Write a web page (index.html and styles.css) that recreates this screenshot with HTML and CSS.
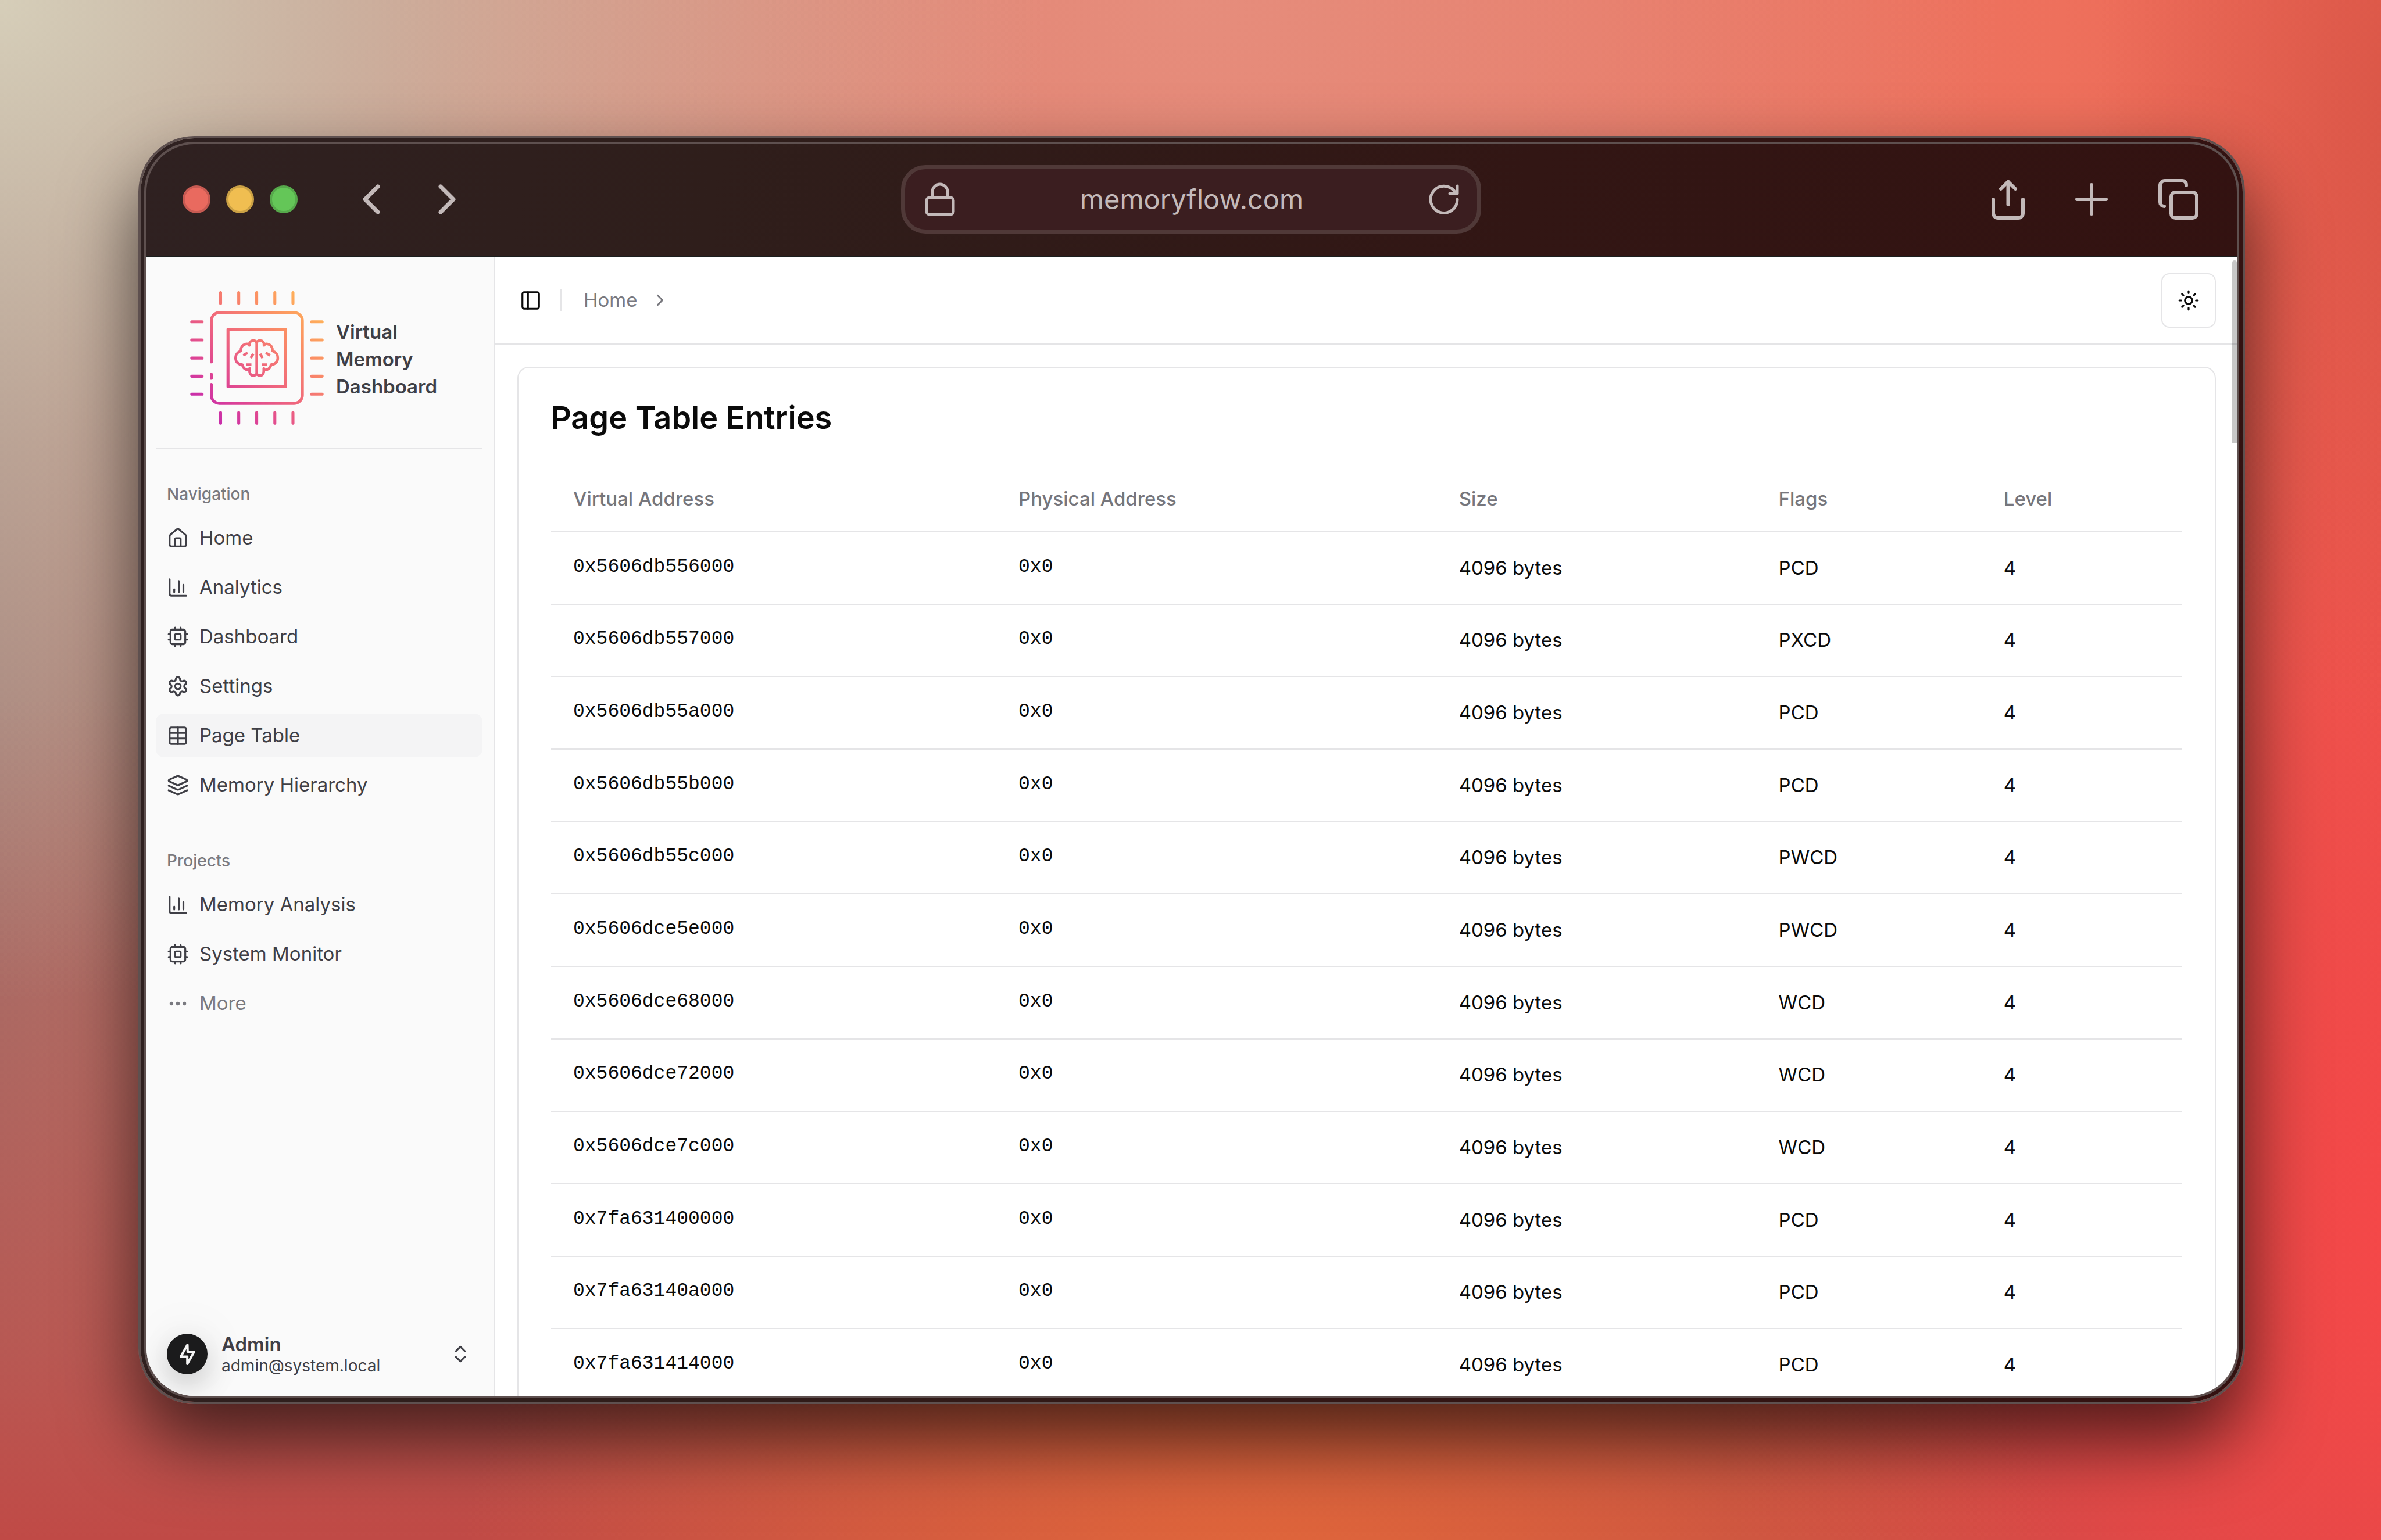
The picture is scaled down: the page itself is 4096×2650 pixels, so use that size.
FILE: index.html
```html
<!DOCTYPE html>
<html lang="en">
<head>
<meta charset="utf-8">
<title>Virtual Memory Dashboard</title>
<link rel="stylesheet" href="styles.css">
</head>
<body>
<svg class="sprite" aria-hidden="true">
  <symbol id="house" viewBox="0 0 24 24"><path d="M15 21v-8a1 1 0 0 0-1-1h-4a1 1 0 0 0-1 1v8"/><path d="M3 10a2 2 0 0 1 .709-1.528l7-5.999a2 2 0 0 1 2.582 0l7 5.999A2 2 0 0 1 21 10v9a2 2 0 0 1-2 2H5a2 2 0 0 1-2-2z"/></symbol>
  <symbol id="chart" viewBox="0 0 24 24"><path d="M3 3v16a2 2 0 0 0 2 2h16"/><path d="M18 17V9"/><path d="M13 17V5"/><path d="M8 17v-3"/></symbol>
  <symbol id="cpu" viewBox="0 0 24 24"><rect width="16" height="16" x="4" y="4" rx="2"/><rect width="6" height="6" x="9" y="9" rx="1"/><path d="M15 2v2M15 20v2M2 15h2M2 9h2M20 15h2M20 9h2M9 2v2M9 20v2"/></symbol>
  <symbol id="gear" viewBox="0 0 24 24"><path d="M12.22 2h-.44a2 2 0 0 0-2 2v.18a2 2 0 0 1-1 1.73l-.43.25a2 2 0 0 1-2 0l-.15-.08a2 2 0 0 0-2.73.73l-.22.38a2 2 0 0 0 .73 2.73l.15.1a2 2 0 0 1 1 1.72v.51a2 2 0 0 1-1 1.74l-.15.09a2 2 0 0 0-.73 2.73l.22.38a2 2 0 0 0 2.73.73l.15-.08a2 2 0 0 1 2 0l.43.25a2 2 0 0 1 1 1.73V20a2 2 0 0 0 2 2h.44a2 2 0 0 0 2-2v-.18a2 2 0 0 1 1-1.73l.43-.25a2 2 0 0 1 2 0l.15.08a2 2 0 0 0 2.73-.73l.22-.39a2 2 0 0 0-.73-2.73l-.15-.08a2 2 0 0 1-1-1.74v-.5a2 2 0 0 1 1-1.74l.15-.09a2 2 0 0 0 .73-2.73l-.22-.38a2 2 0 0 0-2.73-.73l-.15.08a2 2 0 0 1-2 0l-.43-.25a2 2 0 0 1-1-1.73V4a2 2 0 0 0-2-2z"/><circle cx="12" cy="12" r="3"/></symbol>
  <symbol id="table" viewBox="0 0 24 24"><path d="M12 3v18"/><rect width="18" height="18" x="3" y="3" rx="2"/><path d="M3 9h18M3 15h18"/></symbol>
  <symbol id="layers" viewBox="0 0 24 24"><path d="m12.83 2.18a2 2 0 0 0-1.66 0L2.6 6.08a1 1 0 0 0 0 1.83l8.58 3.91a2 2 0 0 0 1.66 0l8.58-3.9a1 1 0 0 0 0-1.83Z"/><path d="m22 17.65-9.17 4.16a2 2 0 0 1-1.66 0L2 17.65"/><path d="m22 12.65-9.17 4.16a2 2 0 0 1-1.66 0L2 12.65"/></symbol>
  <symbol id="dots" viewBox="0 0 24 24"><circle cx="12" cy="12" r="1"/><circle cx="19" cy="12" r="1"/><circle cx="5" cy="12" r="1"/></symbol>
  <symbol id="updown" viewBox="0 0 24 24"><path d="m7 15 5 5 5-5M7 9l5-5 5 5"/></symbol>
  <symbol id="panel" viewBox="0 0 24 24"><rect width="18" height="18" x="3" y="3" rx="2"/><path d="M9 3v18"/></symbol>
  <symbol id="right" viewBox="0 0 24 24"><path d="m9 18 6-6-6-6"/></symbol>
  <symbol id="sun" viewBox="0 0 24 24"><circle cx="12" cy="12" r="4"/><path d="M12 2v2M12 20v2M4.93 4.93l1.41 1.41M17.66 17.66l1.41 1.41M2 12h2M20 12h2M6.34 17.66l-1.41 1.41M19.07 4.93l-1.41 1.41"/></symbol>
</svg>

<div class="window">
  <div class="frame">
    <header class="titlebar">
      <div class="bar-left">
        <div class="lights">
          <button class="light red" aria-label="Close"></button>
          <button class="light yellow" aria-label="Minimize"></button>
          <button class="light green" aria-label="Zoom"></button>
        </div>
        <div class="history">
          <button class="tool" aria-label="Back"><svg width="30" height="52" viewBox="0 0 30 52"><path d="M26 4 4 26l22 22"/></svg></button>
          <button class="tool" aria-label="Forward"><svg width="30" height="52" viewBox="0 0 30 52"><path d="m4 4 22 22L4 48"/></svg></button>
        </div>
      </div>
      <div class="address">
        <svg class="lock" width="52" height="58" viewBox="0 0 52 58" aria-hidden="true"><rect x="3" y="26" width="46" height="29" rx="5"/><path d="M13 26V16a13 13 0 0 1 26 0v10"/></svg>
        <input class="url" type="text" value="memoryflow.com" aria-label="Address">
        <button class="tool reload" aria-label="Reload"><svg width="52" height="52" viewBox="0 0 52 52"><path d="M49 26A23 23 0 1 1 46 15"/><path d="M49 3v13H36"/></svg></button>
      </div>
      <div class="bar-right">
        <button class="tool" aria-label="Share"><svg width="57" height="70" viewBox="0 0 57 70"><path d="M3 35v24a8 8 0 0 0 8 8h35a8 8 0 0 0 8-8V35"/><path d="M28.500 5v39"/><path d="M16 17 28.500 4.500 41 17"/></svg></button>
        <button class="tool" aria-label="New tab"><svg width="56" height="56" viewBox="0 0 56 56"><path d="M28 3v50M3 28h50"/></svg></button>
        <button class="tool" aria-label="Show tabs"><svg width="70" height="70" viewBox="0 0 70 70"><rect x="22" y="23" width="44" height="44" rx="7"/><path d="M48 11c0-5-3-8-7-8H11a8 8 0 0 0-8 8v29c0 4 3 7 7 7"/></svg></button>
      </div>
    </header>

    <div class="app">
      <aside class="sidebar">
        <div class="brand">
          <svg class="logo" viewBox="9 21 811 811" aria-hidden="true">
            <defs><linearGradient id="heat" gradientUnits="userSpaceOnUse" x1="80" y1="760" x2="750" y2="90"><stop offset="0" stop-color="#c52aae"/><stop offset=".22" stop-color="#dd4394"/><stop offset=".48" stop-color="#f0687c"/><stop offset=".75" stop-color="#fb8e64"/><stop offset="1" stop-color="#ffb458"/></linearGradient></defs>
            <g fill="none" stroke="url(#heat)" stroke-width="18" stroke-linecap="round" stroke-linejoin="round">
              <path d="M194 30l.1 65M304 30l.1 65M413 30l.1 65M523 30l.1 65M633 30l.1 65M194 758l.1 64M304 758l.1 64M413 758l.1 64M523 758l.1 64M633 758l.1 64"/>
              <path d="M19 207h63M19 317h63M19 427h63M19 537h63M19 646h63M746 207h64M746 317h64M746 427h64M746 537h64M746 646h64"/>
              <path d="M138 450V200a49 49 0 0 1 49-49H640a50 50 0 0 1 50 50V652a50 50 0 0 1-50 50H187a49 49 0 0 1-49-49V587M138 525v25"/>
              <path d="M239 252h349v349H239z"/>
              <path stroke-width="16" d="M413 335C411 325 402 321 391 321C378 321 366 331 369 350C364 341 352 340 342 343C324 349 316 365 317 384C295 391 285 409 285 427C285 449 301 467 326 467C329 488 347 502 370 498C368 525 380 533 392 533C403 533 411 529 413 520M413 335C415 325 424 321 435 321C448 321 460 331 457 350C462 341 474 340 484 343C502 349 510 365 509 384C531 391 541 409 541 427C541 449 525 467 500 467C497 488 479 502 456 498C458 525 446 533 434 533C423 533 415 529 413 520M413 335V520M370 498V490M456 498V490"/>
              <path stroke-width="16" stroke-linecap="butt" d="M331 411 358 396M392 401 377 427M348 467h33M495 411 468 396M434 401 449 427M478 467h-33"/>
            </g>
          </svg>
          <span class="brand-name">Virtual<br>Memory<br>Dashboard</span>
        </div>
        <nav class="groups">
          <section class="group">
            <h2 class="group-label">Navigation</h2>
            <ul class="menu">
              <li><a class="item" href="#"><svg class="icon"><use href="#house"/></svg>Home</a></li>
              <li><a class="item" href="#"><svg class="icon"><use href="#chart"/></svg>Analytics</a></li>
              <li><a class="item" href="#"><svg class="icon"><use href="#cpu"/></svg>Dashboard</a></li>
              <li><a class="item" href="#"><svg class="icon"><use href="#gear"/></svg>Settings</a></li>
              <li><a class="item active" href="#" aria-current="page"><svg class="icon"><use href="#table"/></svg>Page Table</a></li>
              <li><a class="item" href="#"><svg class="icon"><use href="#layers"/></svg>Memory Hierarchy</a></li>
            </ul>
          </section>
          <section class="group">
            <h2 class="group-label">Projects</h2>
            <ul class="menu">
              <li><a class="item" href="#"><svg class="icon"><use href="#chart"/></svg>Memory Analysis</a></li>
              <li><a class="item" href="#"><svg class="icon"><use href="#cpu"/></svg>System Monitor</a></li>
              <li><a class="item muted" href="#"><svg class="icon"><use href="#dots"/></svg>More</a></li>
            </ul>
          </section>
        </nav>
        <button class="account">
          <span class="avatar"><svg width="29" height="39" viewBox="0 0 29 39"><path d="M14.500 3 3 23.500h11.200V36L26 15H14.800z"/></svg></span>
          <span class="who"><strong class="name">Admin</strong><span class="mail">admin@system.local</span></span>
          <svg class="icon"><use href="#updown"/></svg>
        </button>
      </aside>

      <main class="main">
        <div class="topbar">
          <button class="plain" aria-label="Toggle sidebar"><svg class="icon"><use href="#panel"/></svg></button>
          <span class="separator"></span>
          <nav class="crumbs" aria-label="Breadcrumb"><a class="crumb" href="#">Home</a><svg class="icon small"><use href="#right"/></svg></nav>
          <button class="theme" aria-label="Toggle theme"><svg class="icon"><use href="#sun"/></svg></button>
        </div>
        <div class="content">
          <section class="card">
            <h1 class="card-title">Page Table Entries</h1>
            <table class="entries">
              <colgroup><col class="c-virtual"><col class="c-physical"><col class="c-size"><col class="c-flags"><col class="c-level"></colgroup>
              <thead><tr><th>Virtual Address</th><th>Physical Address</th><th>Size</th><th>Flags</th><th>Level</th></tr></thead>
              <tbody>
                <tr><td class="mono">0x5606db556000</td><td class="mono">0x0</td><td>4096 bytes</td><td>PCD</td><td>4</td></tr>
                <tr><td class="mono">0x5606db557000</td><td class="mono">0x0</td><td>4096 bytes</td><td>PXCD</td><td>4</td></tr>
                <tr><td class="mono">0x5606db55a000</td><td class="mono">0x0</td><td>4096 bytes</td><td>PCD</td><td>4</td></tr>
                <tr><td class="mono">0x5606db55b000</td><td class="mono">0x0</td><td>4096 bytes</td><td>PCD</td><td>4</td></tr>
                <tr><td class="mono">0x5606db55c000</td><td class="mono">0x0</td><td>4096 bytes</td><td>PWCD</td><td>4</td></tr>
                <tr><td class="mono">0x5606dce5e000</td><td class="mono">0x0</td><td>4096 bytes</td><td>PWCD</td><td>4</td></tr>
                <tr><td class="mono">0x5606dce68000</td><td class="mono">0x0</td><td>4096 bytes</td><td>WCD</td><td>4</td></tr>
                <tr><td class="mono">0x5606dce72000</td><td class="mono">0x0</td><td>4096 bytes</td><td>WCD</td><td>4</td></tr>
                <tr><td class="mono">0x5606dce7c000</td><td class="mono">0x0</td><td>4096 bytes</td><td>WCD</td><td>4</td></tr>
                <tr><td class="mono">0x7fa631400000</td><td class="mono">0x0</td><td>4096 bytes</td><td>PCD</td><td>4</td></tr>
                <tr><td class="mono">0x7fa63140a000</td><td class="mono">0x0</td><td>4096 bytes</td><td>PCD</td><td>4</td></tr>
                <tr><td class="mono">0x7fa631414000</td><td class="mono">0x0</td><td>4096 bytes</td><td>PCD</td><td>4</td></tr>
              </tbody>
            </table>
          </section>
        </div>
        <span class="scroll-thumb"></span>
      </main>
    </div>
  </div>
</div>
</body>
</html>
```
FILE: styles.css
```css
* { box-sizing: border-box; margin: 0; padding: 0; }

body {
  height: 100vh;
  padding: 234px 234px 234px 238px;
  overflow: hidden;
  font-family: Inter, "Liberation Sans", sans-serif;
  font-size: 33px;
  line-height: 47px;
  color: #0a0a0a;
  background:
    radial-gradient(ellipse 44% 65% at 0% 0%, #d6ceb9 0%, #d6ceb980 45%, #d6ceb900 100%),
    radial-gradient(ellipse 34% 45% at 50% 0%, #e68d7c 0%, #e68d7c80 50%, #e68d7c00 100%),
    radial-gradient(ellipse 14% 40% at 102% 8%, #d95546 0%, #d9554680 45%, #d9554600 100%),
    radial-gradient(ellipse 34% 45% at 53% 106%, #e2683a 0%, #e2683a90 50%, #e2683a00 100%),
    radial-gradient(ellipse 30% 75% at 102% 80%, #f64748 0%, #f24848b0 45%, #f2484800 100%),
    linear-gradient(0deg, #c04a46 0%, #c04a46b0 12%, #c04a4600 55%),
    linear-gradient(95deg, #9a7670 0%, #c87f70 20%, #e57c6b 50%, #ee705c 82%, #e75f50 100%);
}

button { border: 0; background: none; font: inherit; color: inherit; }
a { color: inherit; text-decoration: none; }
ul { list-style: none; }
svg { display: block; flex: none; fill: none; stroke: currentColor; stroke-linecap: round; stroke-linejoin: round; }
.sprite { display: none; }

.icon { width: 38px; height: 38px; stroke-width: 2; }
.icon.small { width: 33px; height: 33px; }

/* Browser window */
.window {
  height: 100%;
  padding: 6px;
  border: 4px solid #5e504f;
  border-radius: 96px;
  background: linear-gradient(100deg, #2f2121 0%, #2f1e1b 25%, #321614 60%, #331110 100%) border-box;
  background-clip: padding-box;
  box-shadow: 0 64px 130px rgba(0, 0, 0, .65);
}
.frame {
  display: flex;
  flex-direction: column;
  height: 100%;
  border: 4px solid #5e504f;
  border-radius: 86px;
  overflow: hidden;
}

.titlebar {
  display: grid;
  grid-template-columns: 1fr auto 1fr;
  align-items: center;
  flex: none;
  height: 194px;
  padding: 0 65px 3px 62px;
  border-bottom: 2px solid #1b1e1e;
  color: #c3b9b9;
}
.bar-left { display: flex; align-items: center; gap: 112px; }
.bar-right { display: flex; align-items: center; justify-content: flex-end; gap: 87px; }
.lights { display: flex; gap: 27px; }
.light { width: 48px; height: 48px; border-radius: 50%; border: 4px solid; }
.red { background: #e96a5f; border-color: #c65a52; }
.yellow { background: #f0be51; border-color: #cba145; }
.green { background: #64c658; border-color: #56a84b; }
.history { display: flex; gap: 100px; }
.tool { stroke-width: 6px; }
.history .tool { stroke-width: 7px; }
.address {
  display: flex;
  align-items: center;
  width: 998px;
  height: 118px;
  padding: 0 31px 0 34px;
  border: 7px solid #503938;
  border-radius: 42px;
  background: #3b1e20;
}
.lock, .reload { stroke-width: 5px; }
.url {
  flex: 1;
  min-width: 0;
  border: 0;
  background: none;
  color: inherit;
  font: 47px/60px Inter, "Liberation Sans", sans-serif;
  text-align: center;
}

/* Application */
.app { display: flex; flex: 1; min-height: 0; background: #fff; }

.sidebar {
  display: flex;
  flex-direction: column;
  flex: none;
  width: 599px;
  padding: 0 19px 0 16px;
  border-right: 2px solid #e5e5e7;
  background: #fafafa;
  color: #3f3f46;
}
.brand {
  display: flex;
  align-items: center;
  gap: 21px;
  padding: 59px 0 40px 59px;
  border-bottom: 2px solid #e5e5e7;
}
.logo { width: 230px; height: 230px; }
.brand-name { padding-top: 4px; font-weight: 600; }
.groups { display: flex; flex-direction: column; gap: 56px; flex: 1; padding-top: 40px; }
.group-label {
  padding-left: 19px;
  font-size: 28px;
  font-weight: 500;
  line-height: 75px;
  color: #79797f;
}
.menu { display: flex; flex-direction: column; gap: 10px; }
.item {
  display: flex;
  align-items: center;
  gap: 18px;
  height: 75px;
  padding: 0 19px;
  border-radius: 14px;
}
.item.active { background: #f4f4f5; }
.item.muted { color: #79797f; }

.account {
  display: flex;
  align-items: center;
  gap: 24px;
  padding: 0 19px 35px;
  text-align: left;
}
.avatar {
  display: grid;
  place-items: center;
  width: 70px;
  height: 70px;
  border-radius: 50%;
  background: #1b1b1c;
  color: #f4f4f4;
  stroke-width: 4px;
  box-shadow: 0 20px 50px rgba(0, 0, 0, .18), 0 0 90px rgba(0, 0, 0, .08);
}
.who { display: flex; flex-direction: column; flex: 1; }
.name { font-weight: 600; line-height: 41px; }
.mail { font-size: 28px; line-height: 33px; }

.main { position: relative; display: flex; flex-direction: column; flex: 1; min-width: 0; }
.topbar {
  display: flex;
  align-items: center;
  flex: none;
  height: 151px;
  padding: 0 36px 0 43px;
  border-bottom: 2px solid #e5e5e7;
}
.separator { width: 2px; height: 38px; margin: 0 38px 0 32px; background: #e5e5e7; }
.crumbs { display: flex; align-items: center; gap: 23px; flex: 1; color: #79797f; }
.theme {
  display: grid;
  place-items: center;
  width: 94px;
  height: 94px;
  border: 2px solid #e5e5e7;
  border-radius: 14px;
}
.content { flex: 1; min-height: 0; padding: 38px 36px 0 39px; }
.card { padding: 56px; border: 2px solid #e5e5e7; border-radius: 20px; }
.card-title { margin-bottom: 54px; font-size: 54px; line-height: 60px; font-weight: 600; }

.entries { width: 100%; height: 1609px; table-layout: fixed; border-collapse: collapse; }
.c-virtual { width: 27.3%; }
.c-physical { width: 27%; }
.c-size { width: 19.6%; }
.c-flags { width: 13.8%; }
.c-level { width: 12.3%; }
.entries tr { border-bottom: 2px solid #e5e5e7; }
.entries th { height: 112px; padding: 0 38px; font-weight: 500; text-align: left; color: #76767c; }
.entries td { padding: 0 38px; vertical-align: middle; }
.entries .mono { padding-bottom: 4px; font-family: "Liberation Mono", monospace; }

.scroll-thumb {
  position: absolute;
  top: 6px;
  right: 0;
  width: 8px;
  height: 314px;
  border-radius: 4px 4px 0 0;
  background: rgba(0, 0, 0, .22);
}
```
